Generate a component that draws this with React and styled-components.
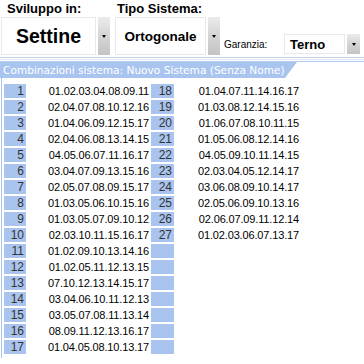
import React from 'react';
import styled, { createGlobalStyle } from 'styled-components';

const Global = createGlobalStyle`
  html, body { margin: 0; padding: 0; background: #fff; }
  body { width: 364px; height: 364px; overflow: hidden; font-family: "Liberation Sans", Arial, sans-serif; }
`;

const Page = styled.div`
  width: 364px;
  height: 364px;
  background: #fff;
`;

const Top = styled.div`
  display: flex;
  align-items: flex-end;
  height: 55px;
`;

const Group = styled.div`
  display: flex;
  flex-direction: column;
  margin-left: ${p => p.$ml}px;
`;

const GroupLabel = styled.div`
  font-weight: bold;
  font-size: 13px;
  line-height: 17px;
  height: 17px;
  color: #000;
  padding-left: ${p => p.$pl}px;
  white-space: nowrap;
`;

const Combo = styled.div`
  display: flex;
  align-items: stretch;
  gap: 2px;
  height: ${p => p.$h}px;
`;

const ComboText = styled.div`
  width: ${p => p.$w}px;
  box-sizing: border-box;
  border: 1px solid #e6eaef;
  background: #fff;
  display: flex;
  align-items: center;
  justify-content: ${p => (p.$left ? 'flex-start' : 'center')};
  padding-left: ${p => (p.$left ? 5 : 0)}px;
  font-weight: bold;
  font-size: ${p => p.$fs}px;
  color: #000;
  white-space: nowrap;
`;

const ComboButton = styled.div`
  width: ${p => p.$w}px;
  background: linear-gradient(to bottom, #ececec 0%, #d6d6d6 45%, #c4c4c4 100%);
  display: flex;
  align-items: center;
  justify-content: center;
`;

const Arrow = styled.div`
  width: 0;
  height: 0;
  border-left: 2.5px solid transparent;
  border-right: 2.5px solid transparent;
  border-top: 3px solid #000;
`;

const Inline = styled.div`
  display: flex;
  align-items: center;
  margin-left: 4px;
  margin-bottom: 1px;
`;

const SmallLabel = styled.div`
  font-size: 10px;
  color: #000;
  width: 60px;
  white-space: nowrap;
`;

const Rules = styled.div`
  margin-top: 2px;
  height: 1px;
  border-top: 1px solid #c3d2e7;
  border-bottom: 1px solid #e2e9f3;
`;

const HeaderRow = styled.div`
  margin-top: 1px;
  border-top: 1px solid #b3cbee;
`;

const Tab = styled.div`
  width: 297px;
  height: 16px;
  background: #a9c5ef;
  clip-path: polygon(0 0, 100% 0, calc(100% - 12px) 100%, 0 100%);
  color: #fff;
  font-family: "DejaVu Sans", Verdana, sans-serif;
  font-size: 10.6px;
  line-height: 16px;
  padding-left: 3px;
  box-sizing: border-box;
  white-space: nowrap;
`;

const Panel = styled.div`
  margin-left: 1px;
  border-left: 1px solid #a9c5ef;
  padding: 6px 0 4px 2px;
  display: flex;
`;

const Column = styled.div`
  width: ${p => p.$w}px;
  display: flex;
  flex-direction: column;
  gap: 2px;
`;

const Row = styled.div`
  display: flex;
  height: 14px;
`;

const NumCell = styled.div`
  width: ${p => p.$w}px;
  background: #a9c5ef;
  color: #333;
  font-size: 12px;
  line-height: 14px;
  text-align: right;
  padding-right: 2px;
  box-sizing: border-box;
`;

const Combination = styled.div`
  flex: 1;
  font-size: 11px;
  letter-spacing: -0.15px;
  line-height: 14px;
  color: #000;
  text-align: right;
  padding-right: 2px;
  white-space: nowrap;
`;

const col1 = [
  '01.02.03.04.08.09.11',
  '02.04.07.08.10.12.16',
  '01.04.06.09.12.15.17',
  '02.04.06.08.13.14.15',
  '04.05.06.07.11.16.17',
  '03.04.07.09.13.15.16',
  '02.05.07.08.09.15.17',
  '01.03.05.06.10.15.16',
  '01.03.05.07.09.10.12',
  '02.03.10.11.15.16.17',
  '01.02.09.10.13.14.16',
  '01.02.05.11.12.13.15',
  '07.10.12.13.14.15.17',
  '03.04.06.10.11.12.13',
  '03.05.07.08.11.13.14',
  '08.09.11.12.13.16.17',
  '01.04.05.08.10.13.17',
];

const col2 = [
  '01.04.07.11.14.16.17',
  '01.03.08.12.14.15.16',
  '01.06.07.08.10.11.15',
  '01.05.06.08.12.14.16',
  '04.05.09.10.11.14.15',
  '02.03.04.05.12.14.17',
  '03.06.08.09.10.14.17',
  '02.05.06.09.10.13.16',
  '02.06.07.09.11.12.14',
  '01.02.03.06.07.13.17',
];

export default function App() {
  const rows2 = Array.from({ length: 17 }, (_, i) => col2[i] || null);
  return (
    <Page>
      <Global />
      <Top>
        <Group $ml={1}>
          <GroupLabel $pl={6}>Sviluppo in:</GroupLabel>
          <Combo $h={38}>
            <ComboText $w={95} $fs={19.5}>Settine</ComboText>
            <ComboButton $w={12}><Arrow /></ComboButton>
          </Combo>
        </Group>
        <Group $ml={5}>
          <GroupLabel $pl={2}>Tipo Sistema:</GroupLabel>
          <Combo $h={38}>
            <ComboText $w={91} $fs={13.5}>Ortogonale</ComboText>
            <ComboButton $w={12}><Arrow /></ComboButton>
          </Combo>
        </Group>
        <Inline>
          <SmallLabel>Garanzia:</SmallLabel>
          <Combo $h={20}>
            <ComboText $w={61} $fs={13} $left>Terno</ComboText>
            <ComboButton $w={13}><Arrow /></ComboButton>
          </Combo>
        </Inline>
      </Top>
      <Rules />
      <HeaderRow>
        <Tab>Combinazioni sistema: Nuovo Sistema (Senza Nome)</Tab>
      </HeaderRow>
      <Panel>
        <Column $w={147}>
          {col1.map((c, i) => (
            <Row key={i}>
              <NumCell $w={22}>{i + 1}</NumCell>
              <Combination>{c}</Combination>
            </Row>
          ))}
        </Column>
        <Column $w={150}>
          {rows2.map((c, i) => (
            <Row key={i}>
              <NumCell $w={23}>{c ? i + 18 : ''}</NumCell>
              <Combination>{c || ''}</Combination>
            </Row>
          ))}
        </Column>
      </Panel>
    </Page>
  );
}
